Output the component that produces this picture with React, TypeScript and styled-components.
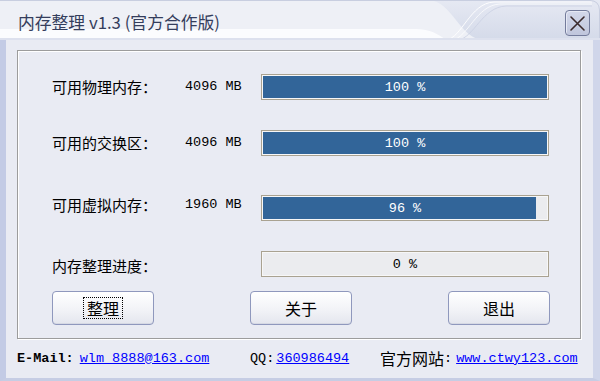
import React from 'react';
import styled, { createGlobalStyle } from 'styled-components';

const Global = createGlobalStyle`
  html, body { margin: 0; padding: 0; width: 600px; height: 381px; overflow: hidden; background: #e9ebf3; }
  #root { width: 600px; height: 381px; }
  * { box-sizing: border-box; }
`;

const cjk = `"Noto Sans CJK SC", "Noto Sans", sans-serif`;
const mono = `"Liberation Mono", "DejaVu Sans Mono", monospace`;

const Window = styled.div`
  width: 600px;
  height: 381px;
  display: flex;
  flex-direction: column;
  background: #e9ebf3;
  overflow: hidden;
`;

const TitleBar = styled.div`
  position: relative;
  height: 40px;
  flex: none;
  display: flex;
  align-items: flex-start;
  padding-left: 18px;
`;

const TitleDecor = styled.svg`
  position: absolute;
  left: 0;
  top: 0;
  width: 600px;
  height: 40px;
`;

const TitleText = styled.div`
  position: relative;
  margin-top: 12px;
  font-family: ${cjk};
  font-size: 16.8px;
  line-height: 20px;
  color: #343d5c;
  white-space: nowrap;
`;

const CloseButton = styled.div`
  position: relative;
  margin-left: auto;
  margin-right: 10px;
  margin-top: 10px;
  width: 25px;
  height: 26px;
  border: 1px solid #737b9b;
  border-radius: 4px;
  background: linear-gradient(#d3d8ea, #c0c6dc);
  box-shadow: inset 1px 1px 0 #e6e9f4;
  display: flex;
  align-items: center;
  justify-content: center;
`;

const Body = styled.div`
  flex: 1;
  display: flex;
  flex-direction: column;
  border-left: 6px solid #c3cbe5;
  border-right: 7px solid #d0d6ea;
  border-bottom: 3px solid #c6cde4;
  padding: 10px 12px 0 11px;
`;

const Group = styled.div`
  height: 289px;
  border: 1px solid #9c9c9c;
  box-shadow: inset 1px 1px 0 #ffffff, 1px 1px 0 #ffffff;
  padding: 23px 0 0 34px;
  display: flex;
  flex-direction: column;
`;

const Row = styled.div<{ $gap: number }>`
  display: grid;
  grid-template-columns: 133px 76px 288px;
  align-items: center;
  height: 26px;
  margin-top: ${p => p.$gap}px;
`;

const Label = styled.div<{ $shift?: number }>`
  font-family: ${cjk};
  font-size: 15px;
  line-height: 26px;
  color: #000;
  white-space: nowrap;
  transform: translateY(${p => p.$shift ?? 0}px);
`;

const Value = styled.div<{ $shift?: number }>`
  font-family: ${mono};
  font-size: 13.5px;
  line-height: 26px;
  color: #000;
  white-space: nowrap;
  transform: translateY(${p => p.$shift ?? 0}px);
`;

const Bar = styled.div`
  position: relative;
  height: 26px;
  border: 1px solid #a9a291;
  background: #f7f7f7;
  padding: 1px;
  display: flex;
`;

const Track = styled.div`
  flex: 1;
  background: #ebecef;
  display: flex;
`;

const Fill = styled.div`
  height: 100%;
  background: #326599;
`;

const BarText = styled.div<{ $light: boolean }>`
  position: absolute;
  inset: 0;
  display: flex;
  align-items: center;
  justify-content: center;
  font-family: ${mono};
  font-size: 13.5px;
  color: ${p => (p.$light ? '#ffffff' : '#000000')};
  white-space: pre;
`;

const ButtonRow = styled.div`
  display: flex;
  gap: 96px;
  margin-top: 14px;
`;

const Button = styled.div`
  width: 102px;
  height: 34px;
  border: 1px solid #8f98bd;
  border-radius: 4px;
  background: linear-gradient(#ffffff, #f2f3f7 55%, #e4e6ee);
  box-shadow: inset 0 -1px 0 #d6d9e4;
  display: flex;
  align-items: center;
  justify-content: center;
  font-family: ${cjk};
  font-size: 16px;
  color: #000;
`;

const Focus = styled.span`
  display: inline-block;
  padding: 0 3px;
  line-height: 20px;
  outline: 1px dotted #000;
  outline-offset: 0;
`;

const Footer = styled.div`
  flex: 1;
  display: grid;
  grid-template-columns: 233px 130px auto;
  align-items: center;
  padding-bottom: 1px;
`;

const FooterItem = styled.div`
  display: flex;
  align-items: center;
  white-space: nowrap;
`;

const MonoText = styled.span<{ $bold?: boolean }>`
  font-family: ${mono};
  font-size: 13.5px;
  font-weight: ${p => (p.$bold ? 700 : 400)};
  color: #000;
`;

const CjkText = styled.span`
  font-family: ${cjk};
  font-size: 16px;
  color: #000;
`;

const Link = styled.a<{ $gap?: number }>`
  font-family: ${mono};
  font-size: 13.5px;
  color: #0000ff;
  text-decoration: underline;
  margin-left: ${p => p.$gap ?? 0}px;
`;

const rows = [
  { label: '可用物理内存：', value: '4096 MB', pct: 100, gap: 0, shift: 0 },
  { label: '可用的交换区：', value: '4096 MB', pct: 100, gap: 30, shift: 0 },
  { label: '可用虚拟内存：', value: '1960 MB', pct: 96, gap: 39, shift: -3 },
];

export default function App() {
  return (
    <Window>
      <Global />
      <TitleBar>
        <TitleDecor viewBox="0 0 600 40">
          <defs>
            <linearGradient id="rt" x1="0" y1="0" x2="0" y2="1">
              <stop offset="0" stopColor="#e6e9f3" />
              <stop offset="1" stopColor="#d4dae9" />
            </linearGradient>
          </defs>
          <rect x="0" y="0" width="600" height="40" fill="url(#rt)" />
          <path d="M0,0 H428 C452,0 460,40 484,40 H0 Z" fill="#eef0f6" />
          <path d="M0,29 H416 C430,29 438,34 446,40 H0 Z" fill="#fbfcfe" />
          <path d="M446,40 C462,38 470,3 494,2 H592" stroke="#ffffff" strokeWidth="1" fill="none" opacity="0.9" />
          <path d="M452,40 C468,38 476,5 500,4 H592" stroke="#ffffff" strokeWidth="1" fill="none" opacity="0.7" />
          <path d="M458,40 C474,38 482,7 506,6 H592" stroke="#c9cfe2" strokeWidth="1" fill="none" opacity="0.8" />
          <path d="M0,0.5 H590 Q599,0.5 599.5,10 V40" stroke="#c8cee0" strokeWidth="1" fill="none" />
          <rect x="0" y="38" width="600" height="2" fill="#dde1ee" />
        </TitleDecor>
        <TitleText>内存整理 v1.3 (官方合作版)</TitleText>
        <CloseButton>
          <svg width="17" height="17" viewBox="0 0 17 17">
            <path d="M2,2 L15,15 M15,2 L2,15" stroke="#3b2a2c" strokeWidth="1.6" strokeLinecap="round" />
          </svg>
        </CloseButton>
      </TitleBar>
      <Body>
        <Group>
          {rows.map(r => (
            <Row key={r.label} $gap={r.gap}>
              <Label $shift={r.shift}>{r.label}</Label>
              <Value $shift={r.shift}>{r.value}</Value>
              <Bar>
                <Track>
                  <Fill style={{ width: `${r.pct}%` }} />
                </Track>
                <BarText $light>{`${r.pct} %`}</BarText>
              </Bar>
            </Row>
          ))}
          <Row $gap={30}>
            <Label $shift={2}>内存整理进度：</Label>
            <Value />
            <Bar>
              <Track />
              <BarText $light={false}>{'0 %'}</BarText>
            </Bar>
          </Row>
          <ButtonRow>
            <Button><Focus>整理</Focus></Button>
            <Button>关于</Button>
            <Button>退出</Button>
          </ButtonRow>
        </Group>
        <Footer>
          <FooterItem>
            <MonoText $bold>E-Mail:</MonoText>
            <Link $gap={6}>wlm_8888@163.com</Link>
          </FooterItem>
          <FooterItem>
            <MonoText>QQ:</MonoText>
            <Link $gap={2}>360986494</Link>
          </FooterItem>
          <FooterItem>
            <CjkText>官方网站</CjkText>
            <MonoText>:</MonoText>
            <Link $gap={4}>www.ctwy123.com</Link>
          </FooterItem>
        </Footer>
      </Body>
    </Window>
  );
}
